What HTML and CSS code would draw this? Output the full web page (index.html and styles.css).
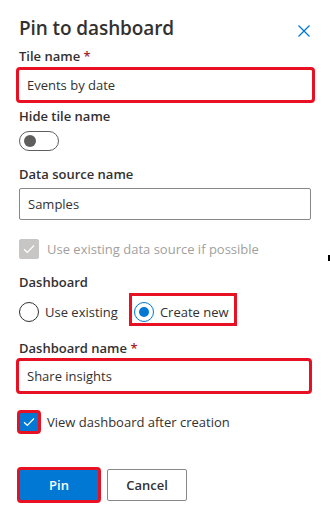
FILE: index.html
```html
<!DOCTYPE html>
<html>
<head>
<meta charset="utf-8">
<link rel="stylesheet" href="styles.css">
</head>
<body>
<div class="panel">
  <div class="header">
    <h1 class="title">Pin to dashboard</h1>
    <button class="close" aria-label="Close">
      <svg width="12" height="12" viewBox="0 0 12 12"><path d="M0.5 0.5 L11.5 11.5 M11.5 0.5 L0.5 11.5" stroke="#0078d4" stroke-width="1.3" fill="none"/></svg>
    </button>
  </div>

  <label class="label l-tile">Tile name <span class="req">*</span></label>
  <div class="input i-tile mark">Events by date</div>

  <label class="label l-hide">Hide tile name</label>
  <div class="toggle"><span class="knob"></span></div>

  <label class="label l-ds">Data source name</label>
  <div class="input i-ds">Samples</div>

  <div class="check c-disabled">
    <span class="box disabled">
      <svg width="12" height="10" viewBox="0 0 12 10"><path d="M1 5.2 L4.3 8.3 L11 1.5" stroke="#fff" stroke-width="1.2" fill="none"/></svg>
    </span>
    <span class="ctext dis">Use existing data source if possible</span>
  </div>

  <label class="label l-dash">Dashboard</label>
  <div class="radios">
    <div class="radio"><span class="circle"></span><span class="rtext">Use existing</span></div>
    <div class="radio sel mark-r"><span class="circle on"><span class="dot"></span></span><span class="rtext">Create new</span></div>
  </div>

  <label class="label l-dn">Dashboard name <span class="req">*</span></label>
  <div class="input i-dn mark">Share insights</div>

  <div class="check c-view">
    <span class="box checked mark-c">
      <svg width="12" height="10" viewBox="0 0 12 10"><path d="M1 5.2 L4.3 8.3 L11 1.5" stroke="#fff" stroke-width="1.2" fill="none"/></svg>
    </span>
    <span class="ctext">View dashboard after creation</span>
  </div>

  <div class="buttons">
    <button class="btn primary mark-b">Pin</button>
    <button class="btn">Cancel</button>
  </div>
</div>
<span class="cursor"></span>
</body>
</html>
```

FILE: styles.css
```css
* { box-sizing: border-box; }
html, body { margin: 0; padding: 0; background: #fff; }
body {
  font-family: "Open Sans", "Noto Sans", sans-serif;
  font-size: 13px;
  color: #323130;
  width: 330px;
  height: 516px;
  position: relative;
  overflow: hidden;
}
.panel {
  display: flex;
  flex-direction: column;
  padding: 14px 19px 0 19px;
}
.header {
  display: flex;
  justify-content: space-between;
  align-items: flex-start;
  height: 28px;
}
.title {
  margin: 0;
  font-size: 19px;
  font-weight: 600;
  line-height: 28px;
  color: #323130;
  letter-spacing: -0.1px;
}
.close {
  border: 0;
  background: none;
  padding: 0;
  margin: 11px 1px 0 0;
  width: 12px;
  height: 12px;
  display: block;
}
.close svg { display: block; }
.label {
  display: block;
  font-weight: 600;
  line-height: 20px;
  height: 20px;
  font-size: 13px;
}
.req { color: #a4262c; }
.l-tile { margin-top: 4px; }
.l-hide { margin-top: 5px; }
.l-ds { margin-top: 13px; }
.l-dash { margin-top: 13px; }
.l-dn { margin-top: 16px; }

.input {
  height: 32px;
  border: 1px solid #8a8886;
  border-radius: 2px;
  padding: 0 8px;
  line-height: 30px;
  font-size: 13px;
}
.i-tile { margin-top: 3px; }
.i-ds { margin-top: 4px; }
.i-dn { margin-top: 2px; }
.mark { outline: 3px solid #e81123; outline-offset: -1px; }
.i-tile.mark { margin-left: -1px; margin-right: -2px; }
.i-dn.mark { margin-left: -1px; margin-right: 1px; }

.toggle {
  margin-top: 5px;
  width: 40px;
  height: 20px;
  border: 1px solid #605e5c;
  border-radius: 10px;
  display: flex;
  align-items: center;
  padding-left: 4px;
}
.knob {
  width: 12px;
  height: 12px;
  border-radius: 50%;
  background: #605e5c;
}

.check {
  display: flex;
  align-items: center;
  gap: 8px;
  height: 20px;
}
.c-disabled { margin-top: 19px; }
.c-view { margin-top: 20px; }
.box {
  width: 20px;
  height: 20px;
  border-radius: 2px;
  display: flex;
  align-items: center;
  justify-content: center;
  flex: none;
}
.box.disabled { background: #c8c6c4; border: 1px solid #c8c6c4; }
.box.checked { background: #0078d4; border: 1px solid #0078d4; }
.mark-c { outline: 3px solid #e81123; outline-offset: -1px; }
.ctext { line-height: 20px; }
.ctext.dis { color: #a19f9d; }

.radios {
  display: flex;
  align-items: center;
  margin-top: 10px;
  height: 20px;
}
.radio {
  display: flex;
  align-items: center;
  gap: 6px;
}
.radio + .radio { margin-left: 14px; }
.circle {
  width: 20px;
  height: 20px;
  border-radius: 50%;
  border: 1px solid #323130;
  display: flex;
  align-items: center;
  justify-content: center;
  flex: none;
}
.circle.on { border-color: #0078d4; }
.dot { width: 10px; height: 10px; border-radius: 50%; background: #0078d4; }
.rtext { line-height: 20px; }
.mark-r {
  outline: 3px solid #e81123;
  outline-offset: 0;
  padding: 6px 5px 1px 2px;
  margin: -6px 0 -1px -2px;
}

.buttons {
  display: flex;
  gap: 8px;
  margin-top: 37px;
}
.btn {
  width: 80px;
  height: 32px;
  border: 1px solid #8a8886;
  border-radius: 2px;
  background: #fff;
  color: #323130;
  font-family: inherit;
  font-size: 13px;
  font-weight: 600;
  padding: 0;
}
.btn.primary {
  background: #0078d4;
  border-color: #0078d4;
  color: #fff;
}
.mark-b { outline: 3px solid #e81123; outline-offset: -1px; }
.cursor {
  position: absolute;
  left: 328px;
  top: 255px;
  width: 2px;
  height: 6px;
  background: #000;
}
```
